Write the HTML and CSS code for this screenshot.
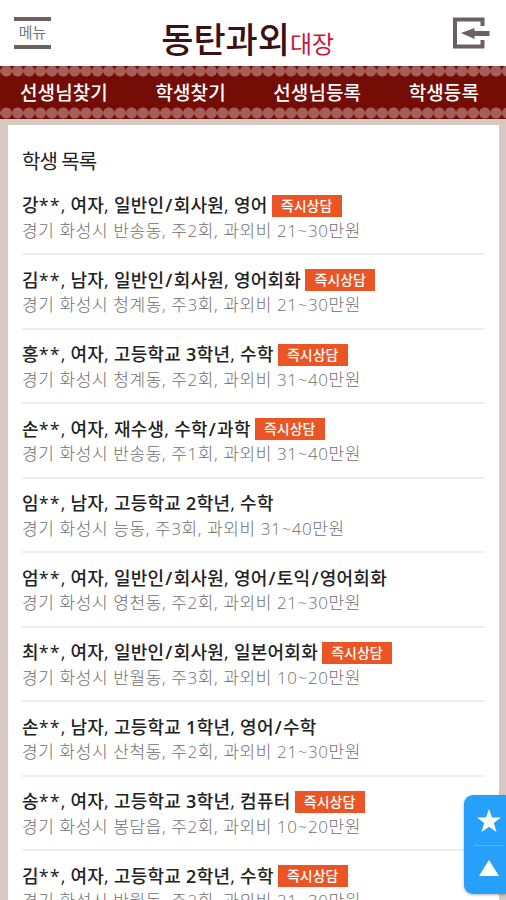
FILE: index.html
```html
<!DOCTYPE html>
<html lang="ko">
<head>
<meta charset="utf-8">
<title>동탄과외대장</title>
<link rel="stylesheet" href="styles.css">
</head>
<body>
<header class="header">
  <a class="menu">메뉴</a>
  <h1 class="logo">동탄과외<span class="logo-sub">대장</span></h1>
  <svg class="login" viewBox="0 0 38 32" width="38" height="32"><path d="M29.500 9V2.500H2v27h27.500V23" fill="none" stroke="#6d6061" stroke-width="4"/><path d="M8 16l13.500-5v3h15v5h-15v3z" fill="#6d6061"/></svg>
</header>
<nav class="nav">
  <a>선생님찾기</a><a>학생찾기</a><a>선생님등록</a><a>학생등록</a>
</nav>
<main class="panel">
  <h2 class="title">학생 목록</h2>
  <ul class="list">
    <li class="row"><div class="name"><span>강<i>**</i>, 여자, 일반인<s>/</s>회사원, 영어</span><b class="badge">즉시상담</b></div><div class="info">경기 화성시 반송동, 주2회, 과외비 21~30만원</div></li>
    <li class="row"><div class="name"><span>김<i>**</i>, 남자, 일반인<s>/</s>회사원, 영어회화</span><b class="badge">즉시상담</b></div><div class="info">경기 화성시 청계동, 주3회, 과외비 21~30만원</div></li>
    <li class="row"><div class="name"><span>홍<i>**</i>, 여자, 고등학교 <em>3</em>학년, 수학</span><b class="badge">즉시상담</b></div><div class="info">경기 화성시 청계동, 주2회, 과외비 31~40만원</div></li>
    <li class="row"><div class="name"><span>손<i>**</i>, 여자, 재수생, 수학<s>/</s>과학</span><b class="badge">즉시상담</b></div><div class="info">경기 화성시 반송동, 주1회, 과외비 31~40만원</div></li>
    <li class="row"><div class="name"><span>임<i>**</i>, 남자, 고등학교 <em>2</em>학년, 수학</span></div><div class="info">경기 화성시 능동, 주3회, 과외비 31~40만원</div></li>
    <li class="row"><div class="name"><span>엄<i>**</i>, 여자, 일반인<s>/</s>회사원, 영어<s>/</s>토익<s>/</s>영어회화</span></div><div class="info">경기 화성시 영천동, 주2회, 과외비 21~30만원</div></li>
    <li class="row"><div class="name"><span>최<i>**</i>, 여자, 일반인<s>/</s>회사원, 일본어회화</span><b class="badge">즉시상담</b></div><div class="info">경기 화성시 반월동, 주3회, 과외비 10~20만원</div></li>
    <li class="row"><div class="name"><span>손<i>**</i>, 남자, 고등학교 <em>1</em>학년, 영어<s>/</s>수학</span></div><div class="info">경기 화성시 산척동, 주2회, 과외비 21~30만원</div></li>
    <li class="row"><div class="name"><span>송<i>**</i>, 여자, 고등학교 <em>3</em>학년, 컴퓨터</span><b class="badge">즉시상담</b></div><div class="info">경기 화성시 봉담읍, 주2회, 과외비 10~20만원</div></li>
    <li class="row"><div class="name"><span>김<i>**</i>, 여자, 고등학교 <em>2</em>학년, 수학</span><b class="badge">즉시상담</b></div><div class="info">경기 화성시 반월동, 주2회, 과외비 21~30만원</div></li>
  </ul>
</main>
<aside class="quick">
  <svg viewBox="0 0 26 26" width="26" height="26"><path d="M13 1l3 8.500h9l-7.200 5.500 2.700 9L13 18.700 5.500 24l2.700-9L1 9.500h9z" fill="#fff"/></svg>
  <span class="quick-line"></span>
  <svg viewBox="0 0 22 18" width="22" height="18"><path d="M11 1l10 16H1z" fill="#fff"/></svg>
</aside>
</body>
</html>
```
FILE: styles.css
```css
* { box-sizing: border-box; }
body {
  margin: 0;
  height: 900px;
  overflow: hidden;
  background: #d6c9c2;
  font-family: "Open Sans", "Noto Sans CJK KR", sans-serif;
  color: #222;
}
.header {
  display: flex;
  justify-content: space-between;
  height: 66px;
  padding: 17px 15px 0 14px;
  background: #fff;
}
.menu {
  width: 37px;
  height: 32px;
  border: solid #6d6061;
  border-width: 4px 0;
  text-align: center;
  font-size: 15px;
  line-height: 23px;
  color: #777;
}
.logo {
  margin: 0 0 0 -9px;
  font-size: 35px;
  line-height: 46px;
  font-weight: 500;
  letter-spacing: 0;
  color: #3d1014;
  white-space: nowrap;
}
.logo-sub { font-size: 24px; color: #c9173f; font-weight: 400; letter-spacing: -.2px; }
.login { display: block; }
.nav {
  display: flex;
  justify-content: space-between;
  height: 53px;
  padding: 0 27px 0 20px;
  background:
    radial-gradient(circle, #a65f58 5.200px, transparent 5.900px) .6px -1px / 11.400px 12px repeat-x,
    radial-gradient(circle, #a65f58 5.200px, transparent 5.900px) .6px 41px / 11.400px 12px repeat-x,
    #730d05;
  color: #fff;
  font-size: 19px;
  font-weight: 500;
  line-height: 54px;
  letter-spacing: .1px;
}
.panel {
  height: 790px;
  margin: 6px 7px 0 8px;
  padding: 23px 14px 0;
  background: #fff;
  overflow: hidden;
}
.title {
  margin: 0;
  font-size: 20px;
  line-height: 28px;
  font-weight: 400;
  letter-spacing: -.9px;
}
.list { margin: 0; padding: 0; list-style: none; }
.row {
  height: 74.550px;
  padding-top: 11px;
  border-bottom: 2px solid #eee;
}
.row:first-child { height: 79px; padding-top: 15.500px; }
.name {
  display: flex;
  align-items: center;
  height: 25px;
  font-size: 18px;
  font-weight: 500;
  letter-spacing: .25px;
  white-space: nowrap;
}
.name i { font-style: normal; letter-spacing: 1px; }
.name s { margin: 0 1px; font-weight: 600; text-decoration: none; }
.name em { font-style: normal; font-weight: 600; }
.badge {
  width: 70px;
  height: 22px;
  margin: 3px 0 0 4px;
  background: #eb5525;
  color: #fff;
  font-size: 14px;
  line-height: 22px;
  font-weight: 500;
  letter-spacing: 0;
  text-align: center;
}
.info {
  font-size: 17px;
  line-height: 28px;
  color: #707070;
  font-weight: 300;
  letter-spacing: .6px;
  white-space: nowrap;
}
.quick {
  position: absolute;
  right: 0;
  top: 795px;
  display: flex;
  flex-direction: column;
  align-items: center;
  width: 42px;
  height: 99px;
  padding: 13px 0 0 7px;
  border-radius: 9px 0 0 9px;
  background: #27a0fb;
  box-shadow: 0 1px 3px rgba(0, 0, 0, .3);
}
.quick-line { width: 30px; height: 1px; margin: 11px 0 13px; background: #58b7fc; }
```
